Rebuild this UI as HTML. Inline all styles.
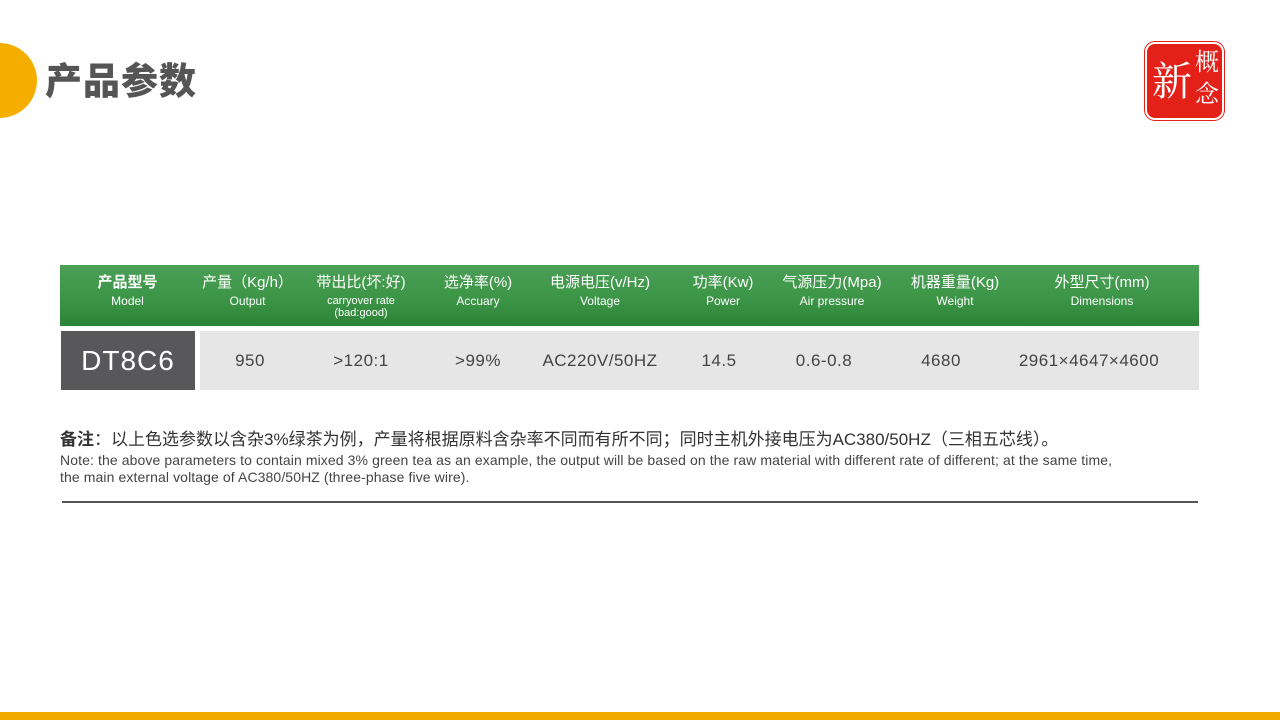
<!DOCTYPE html>
<html><head><meta charset="utf-8"><style>
body{margin:0;width:1280px;height:720px;position:relative;background:#fff;overflow:hidden;font-family:"Liberation Sans","Noto Sans CJK SC",sans-serif;}
.abs{position:absolute}
.hdr{left:60px;top:265px;width:1139px;height:61px;background:linear-gradient(#4aa055,#3b9446 60%,#2c8236);}
.c{position:absolute;text-align:center;color:#fff;}
.c b{display:block;font-size:15px;font-weight:normal;line-height:20px;margin-top:8px;white-space:nowrap}
.c i{display:block;font-style:normal;font-size:12px;line-height:12px;margin-top:2px}
.v{position:absolute;top:331px;height:59px;line-height:59px;text-align:center;color:#444;font-size:17px;letter-spacing:0.5px}
</style></head><body>
<div class="abs" style="left:-38px;top:43px;width:75px;height:75px;border-radius:50%;background:#f5ad00"></div>
<div class="abs" style="left:45px;top:58px;font-size:37px;font-weight:900;color:#555;line-height:48px;letter-spacing:1px">产品参数</div>
<div class="abs" style="left:1145px;top:42px;width:79px;height:78px;background:#e32119;border-radius:10px;border:2px solid #fff;outline:1px solid #e32119;box-sizing:border-box"></div>
<div class="abs" style="left:1152px;top:48px;font-family:'Noto Serif CJK SC',serif;color:#fff;font-size:40px;line-height:62px">新</div>
<div class="abs" style="left:1195px;top:44px;font-family:'Noto Serif CJK SC',serif;color:#fff;font-size:24px;line-height:32px;width:28px">概<br>念</div>

<div class="abs hdr"></div>
<div class="c" style="left:60px;top:265px;width:135px"><b style="font-weight:bold">产品型号</b><i>Model</i></div>
<div class="c" style="left:195px;top:265px;width:105px"><b>产量（Kg/h）</b><i>Output</i></div>
<div class="c" style="left:300px;top:265px;width:122px"><b>带出比(坏:好)</b><i style="font-size:11px;line-height:12px">carryover rate<br>(bad:good)</i></div>
<div class="c" style="left:422px;top:265px;width:112px"><b>选净率(%)</b><i>Accuary</i></div>
<div class="c" style="left:534px;top:265px;width:132px"><b>电源电压(v/Hz)</b><i>Voltage</i></div>
<div class="c" style="left:672px;top:265px;width:102px"><b>功率(Kw)</b><i>Power</i></div>
<div class="c" style="left:772px;top:265px;width:120px"><b>气源压力(Mpa)</b><i>Air pressure</i></div>
<div class="c" style="left:897px;top:265px;width:116px"><b>机器重量(Kg)</b><i>Weight</i></div>
<div class="c" style="left:1010px;top:265px;width:184px"><b>外型尺寸(mm)</b><i>Dimensions</i></div>

<div class="abs" style="left:61px;top:331px;width:134px;height:59px;background:#58585a;color:#fff;font-size:28px;line-height:59px;text-align:center;letter-spacing:1px">DT8C6</div>
<div class="abs" style="left:200px;top:331px;width:999px;height:59px;background:#e6e6e6"></div>
<div class="v" style="left:200px;width:100px">950</div>
<div class="v" style="left:300px;width:122px">&gt;120:1</div>
<div class="v" style="left:422px;width:112px">&gt;99%</div>
<div class="v" style="left:530px;width:140px">AC220V/50HZ</div>
<div class="v" style="left:668px;width:102px">14.5</div>
<div class="v" style="left:772px;width:104px">0.6-0.8</div>
<div class="v" style="left:890px;width:102px">4680</div>
<div class="v" style="left:1005px;width:168px">2961×4647×4600</div>

<div class="abs" style="left:60px;top:425px;font-size:17px;color:#333;white-space:nowrap"><b>备注</b>：以上色选参数以含杂3%绿茶为例，产量将根据原料含杂率不同而有所不同；同时主机外接电压为AC380/50HZ（三相五芯线）。</div>
<div class="abs" style="left:60px;top:452px;font-size:14px;color:#444;line-height:17px;white-space:nowrap;letter-spacing:0.1px">Note: the above parameters to contain mixed 3% green tea as an example, the output will be based on the raw material with different rate of different; at the same time,<br>the main external voltage of AC380/50HZ (three-phase five wire).</div>
<div class="abs" style="left:62px;top:501px;width:1136px;height:2px;background:#555"></div>
<div class="abs" style="left:0;top:712px;width:1280px;height:8px;background:#f0aa00"></div>
</body></html>
